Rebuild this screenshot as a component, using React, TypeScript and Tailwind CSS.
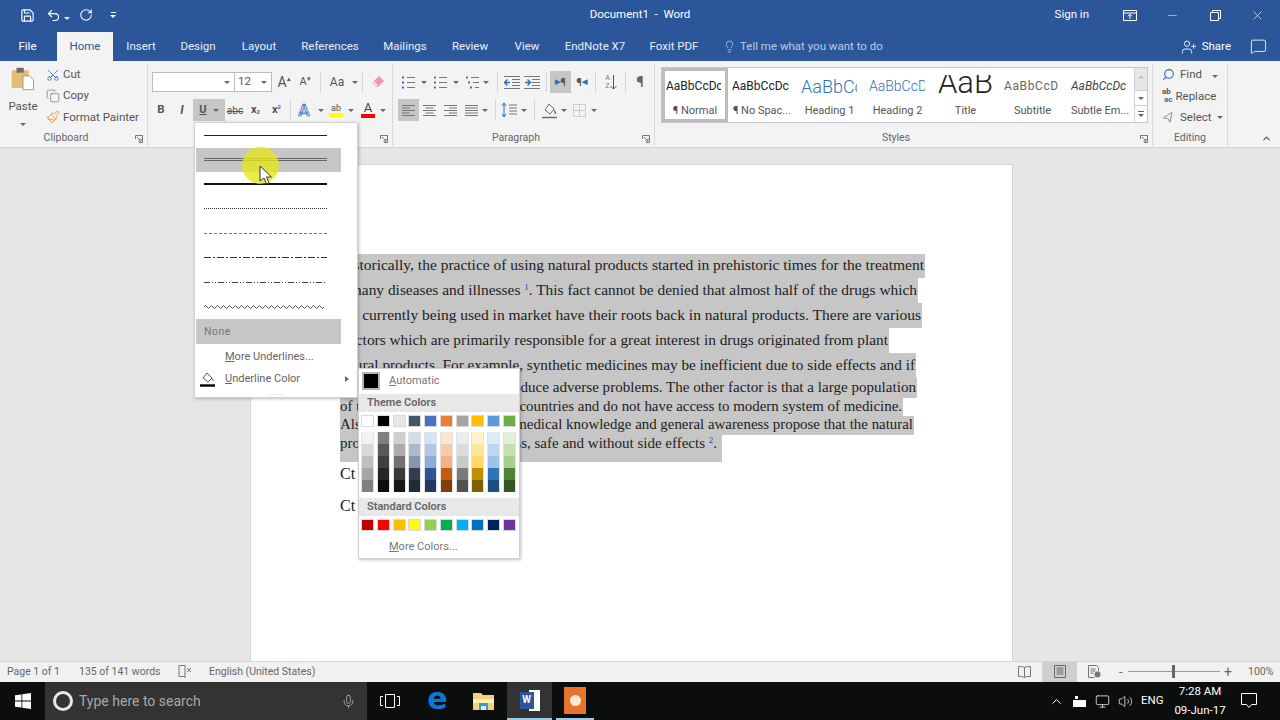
import { ReactNode } from "react";
import { Save, Undo2, RotateCw, Lightbulb, UserPlus, MessageSquare, X, Minus, Scissors, Copy, Paintbrush, Search, MousePointer2, ChevronUp, Mic, Volume2, Monitor } from "lucide-react";

const themeBase = ["bg-[#ffffff]", "bg-[#000000]", "bg-[#e7e6e6]", "bg-[#44546a]", "bg-[#4472c4]", "bg-[#ed7d31]", "bg-[#a5a5a5]", "bg-[#ffc000]", "bg-[#5b9bd5]", "bg-[#70ad47]"];
const themeShades = [
  ["bg-[#f2f2f2]", "bg-[#d9d9d9]", "bg-[#bfbfbf]", "bg-[#a6a6a6]", "bg-[#808080]"],
  ["bg-[#808080]", "bg-[#595959]", "bg-[#404040]", "bg-[#262626]", "bg-[#0d0d0d]"],
  ["bg-[#d0cece]", "bg-[#afabab]", "bg-[#767171]", "bg-[#3b3838]", "bg-[#181717]"],
  ["bg-[#d6dce4]", "bg-[#adb9ca]", "bg-[#8497b0]", "bg-[#333f4f]", "bg-[#222a35]"],
  ["bg-[#d9e2f3]", "bg-[#b4c6e7]", "bg-[#8eaadb]", "bg-[#2f5496]", "bg-[#1f3864]"],
  ["bg-[#fbe5d5]", "bg-[#f7cbac]", "bg-[#f4b183]", "bg-[#c55a11]", "bg-[#833c0b]"],
  ["bg-[#ededed]", "bg-[#dbdbdb]", "bg-[#c9c9c9]", "bg-[#7b7b7b]", "bg-[#525252]"],
  ["bg-[#fff2cc]", "bg-[#fee599]", "bg-[#ffd966]", "bg-[#bf9000]", "bg-[#7f6000]"],
  ["bg-[#deebf6]", "bg-[#bdd7ee]", "bg-[#9dc3e6]", "bg-[#2e75b5]", "bg-[#1e4e79]"],
  ["bg-[#e2efd9]", "bg-[#c5e0b3]", "bg-[#a8d08d]", "bg-[#538135]", "bg-[#375623]"],
];
const standard = ["bg-[#c00000]", "bg-[#ff0000]", "bg-[#ffc000]", "bg-[#ffff00]", "bg-[#92d050]", "bg-[#00b050]", "bg-[#00b0f0]", "bg-[#0070c0]", "bg-[#002060]", "bg-[#7030a0]"];

const tabs = [
  { t: "Insert", c: "w-[56px]" },
  { t: "Design", c: "w-[58px]" },
  { t: "Layout", c: "w-[64px]" },
  { t: "References", c: "w-[78px]" },
  { t: "Mailings", c: "w-[72px]" },
  { t: "Review", c: "w-[58px]" },
  { t: "View", c: "w-[56px]" },
  { t: "EndNote X7", c: "w-[80px]" },
  { t: "Foxit PDF", c: "w-[78px]" },
];

const styleItems = [
  { p: "AaBbCcDc", l: "¶ Normal", c: "text-[12px] ml-[1px] mr-[4px] text-[#222]", w: "w-[66px]", sel: true },
  { p: "AaBbCcDc", l: "¶ No Spac...", c: "text-[12px] ml-[4px] mr-[7px] text-[#222]", w: "w-[68px]" },
  { p: "AaBbCcDc", l: "Heading 1", c: "text-[18px] ml-[5px] mr-[6px] text-[#2e74b5] font-light", w: "w-[67px]" },
  { p: "AaBbCcDc", l: "Heading 2", c: "text-[14px] ml-[6px] mr-[7px] text-[#2e74b5] font-light", w: "w-[69px]" },
  { p: "AaB", l: "Title", c: "text-[31px] leading-[20px] justify-center pb-[6px] [clip-path:inset(4px_0_0_0)] text-[#222] font-light", w: "w-[67px]" },
  { p: "AaBbCcDc", l: "Subtitle", c: "text-[12px] ml-[5px] mr-[7px] tracking-[0.6px] text-[#666]", w: "w-[67px]" },
  { p: "AaBbCcDc", l: "Subtle Em...", c: "text-[12px] ml-[5px] mr-[7px] italic text-[#444]", w: "w-[68px]" },
];

function Sup({ n }: { n: string }) {
  return <sup className="text-[9px] text-[#3b3bc0]">{n}</sup>;
}

// right-aligned so the visible end of each line sits where the selection ends;
// lines with a left part also start at the margin, the colour menu covers the join
const docLines: { l?: string; t: ReactNode; c: string }[] = [
  { t: "Historically, the practice of using natural products started in prehistoric times for the treatment", c: "w-[585px] h-[24px] pb-[2px] pr-px text-[15.5px]" },
  { t: <>of many diseases and illnesses <Sup n="1" />. This fact cannot be denied that almost half of the drugs which</>, c: "w-[578px] h-[25px] pb-[2px] pr-px text-[15.4px]" },
  { t: "are currently being used in market have their roots back in natural products. There are various", c: "w-[582px] h-[25px] pb-[2px] pr-px text-[15.5px]" },
  { t: "factors which are primarily responsible for a great interest in drugs originated from plant", c: "w-[549px] h-[25px] pb-[2px] pr-px text-[15.35px]" },
  { t: "natural products. For example, synthetic medicines may be inefficient due to side effects and if", c: "w-[576px] h-[24px] pr-px text-[15.25px]" },
  { t: "may produce adverse problems. The other factor is that a large population", c: "w-[577px] h-[21px] pr-px text-[15.1px]" },
  { l: "of the people in developing", t: "countries and do not have access to modern system of medicine.", c: "w-[563px] h-[18px] pb-[2px] pr-px text-[14.9px]" },
  { l: "Also, people with increased", t: "medical knowledge and general awareness propose that the natural", c: "w-[574px] h-[19px] pb-[3px] pr-px text-[14.9px]" },
  { l: "products are", t: <>harmless, safe and without side effects <Sup n="2" />.</>, c: "w-[382px] h-[27px] pb-[11px] pr-[5px] text-[15px]" },
];

function Caret({ c = "text-[#666]" }: { c?: string }) {
  return <span className={`inline-block w-0 h-0 border-l-[3px] border-r-[3px] border-t-[3px] border-l-transparent border-r-transparent border-t-current ${c}`} />;
}

function Cell({ c, children }: { c: string; children?: ReactNode }) {
  return <div className={`flex items-center justify-center shrink-0 h-[22px] ${c}`}>{children}</div>;
}

function Sep({ c }: { c: string }) {
  return <div className={`w-px h-[20px] bg-[#d4d4d4] shrink-0 ${c}`} />;
}

function Launcher() {
  return (
    <svg width="8" height="8" viewBox="0 0 8 8" className="absolute right-[4px] bottom-[3px]" fill="none" stroke="#777">
      <path d="M.5 4V.5H7.5M7.5 .5V7.5H4M2 2l4 4M6 3.500V6H3.500" />
    </svg>
  );
}

function Group({ label, c, pad = "pr-[15px]", launcher = true, children }: { label?: string; c: string; pad?: string; launcher?: boolean; children: ReactNode }) {
  return (
    <div className={`relative shrink-0 flex flex-col border-r border-[#dadada] mt-[3px] mb-px ${c}`}>
      <div className="flex-1 min-h-0">{children}</div>
      <div className={`h-[18px] pt-[3px] text-center text-[10.5px] leading-[14px] text-[#666] ${pad}`}>{label}</div>
      {launcher ? <Launcher /> : null}
    </div>
  );
}

// horizontal text lines used by the list and alignment buttons
function Lines({ align, n = 5 }: { align: "l" | "c" | "r" | "j"; n?: number }) {
  const rows = Array.from({ length: n }, (_, i) => {
    const short = i % 2 === 1 && align !== "j";
    const w = short ? 8 : 13;
    const x = align === "l" || align === "j" ? 0 : align === "c" ? (13 - w) / 2 : 13 - w;
    return <path key={i} d={`M${x} ${1.5 + i * 2.5}h${w}`} />;
  });
  return (
    <svg width="13" height="13" viewBox="0 0 13 13" fill="none" stroke="#777">
      {rows}
    </svg>
  );
}

function ListIcon({ kind }: { kind: "b" | "n" | "m" }) {
  return (
    <svg width="15" height="15" viewBox="0 0 15 15" fill="none">
      <path d={kind === "m" ? "M6 2.500h8M8 7.500h6M10 12.500h4" : "M6 2.500h8M6 7.500h8M6 12.500h8"} stroke="#777" />
      <path d={kind === "m" ? "M1 2.500h2M3 7.500h2M5 12.500h2" : "M1 2.500h2M1 7.500h2M1 12.500h2"} stroke={kind === "b" ? "#2f6db5" : "#8a6d3b"} strokeWidth="2" />
    </svg>
  );
}

function IndentIcon({ flip }: { flip?: boolean }) {
  return (
    <svg width="16" height="13" viewBox="0 0 16 13" fill="none">
      <path d="M0 .5h16M8 3.500h8M8 6.500h8M8 9.500h8M0 12.500h16" stroke="#777" />
      <path d={flip ? "M1 6.500h5M3.500 3.500l3 3-3 3" : "M6 6.500H1M3.500 3.500l-3 3 3 3"} stroke="#2f6db5" strokeWidth="1.4" />
    </svg>
  );
}

function ParaDir({ rtl }: { rtl?: boolean }) {
  return (
    <span className="flex items-center text-[11px] font-bold text-[#5a5a5a] leading-none">
      {rtl ? "¶" : <span className="text-[7px] text-[#2f6db5]">▶</span>}
      {rtl ? <span className="text-[7px] text-[#2f6db5]">◀</span> : "¶"}
    </span>
  );
}

function TabsRow() {
  return (
    <div className="h-[31px] bg-[#2b579a] flex items-end text-[11.5px] text-[#e8eef7]">
      <div className="w-[55px] h-[31px] pt-[2px] flex items-center justify-center text-white">File</div>
      <div className="w-[2px]" />
      <div className="w-[56px] h-[29px] bg-[#f3f3f3] flex items-center justify-center text-[#2b579a]">Home</div>
      {tabs.map((x) => (
        <div key={x.t} className={`h-[31px] pt-[2px] flex items-center justify-center whitespace-nowrap ${x.c}`}>
          {x.t}
        </div>
      ))}
      <div className="h-[31px] pt-[2px] flex items-center gap-[4px] ml-[10px] text-[#b9cbe4]">
        <Lightbulb size={13} strokeWidth={1.4} />
        <span>Tell me what you want to do</span>
      </div>
      <div className="flex-1" />
      <div className="h-[31px] pt-[2px] flex items-center gap-[5px] text-white">
        <UserPlus size={16} strokeWidth={1.3} />
        <span>Share</span>
      </div>
      <div className="h-[31px] pt-[1px] flex items-center ml-[19px] mr-[13px] text-white">
        <MessageSquare size={17} strokeWidth={1.2} />
      </div>
    </div>
  );
}

function TitleRow() {
  return (
    <div className="h-[30px] bg-[#2b579a] flex items-center text-white relative">
      <div className="flex items-center pl-[20px]">
        <Save size={15} strokeWidth={1.8} />
        <Undo2 size={15} strokeWidth={1.8} className="ml-[11px]" />
        <span className="ml-[3px]"><Caret c="text-[#e8eef7]" /></span>
        <RotateCw size={14} strokeWidth={1.8} className="ml-[9px]" />
        <span className="ml-[17px] flex flex-col items-center gap-[2px]">
          <span className="w-[5px] h-px bg-white" />
          <Caret c="text-white" />
        </span>
      </div>
      <div className="absolute left-[579px] w-[122px] text-center text-[11.5px] whitespace-pre">{"Document1  -  Word"}</div>
      <div className="flex-1" />
      <div className="text-[11.5px] whitespace-nowrap mr-[34px]">Sign in</div>
      <svg width="14" height="11" viewBox="0 0 14 11" fill="none" stroke="white" className="mr-[29px]">
        <path d="M.5.5h13v10H.5zM.5 3h13M7 9V4.500M5 6.200l2-2 2 2" />
      </svg>
      <Minus size={13} strokeWidth={1} className="mr-[31px]" />
      <svg width="11" height="11" viewBox="0 0 11 11" fill="none" stroke="white" className="mr-[29px]">
        <path d="M.5 2.500h8v8h-8zM2.500 2.500v-2h8v8h-2" />
      </svg>
      <X size={15} strokeWidth={1} className="mr-[15px]" />
    </div>
  );
}

function Ribbon() {
  return (
    <div className="h-[87px] bg-[#f3f3f3] border-b border-[#d4d4d4] flex text-[11.5px] text-[#555]">
      <Group label="Clipboard" c="w-[148px]">
        <div className="flex h-full">
          <div className="w-[46px] flex flex-col items-center pt-[3px]">
            <svg width="30" height="29" viewBox="0 0 30 29">
              <rect x="1" y="4" width="21" height="22" rx="1" fill="#e6bb74" />
              <rect x="7" y="1" width="9" height="6" fill="#6d6d6d" />
              <path d="M15 11h8l5 5v12H15z" fill="#fff" stroke="#8a8a8a" />
            </svg>
            <span className="mt-[8px] leading-[14px]">Paste</span>
            <span className="mt-[4px] leading-none"><Caret /></span>
          </div>
          <div className="flex flex-col">
            <div className="h-[21.5px] flex items-center gap-[3px]">
              <Scissors size={14} strokeWidth={1.4} className="text-[#3a6fb0] -rotate-90" />
              Cut
            </div>
            <div className="h-[21.5px] flex items-center gap-[3px]">
              <Copy size={14} strokeWidth={1.2} className="text-[#777]" />
              Copy
            </div>
            <div className="h-[21.5px] flex items-center gap-[3px]">
              <Paintbrush size={14} strokeWidth={1.6} className="text-[#d99a3c]" />
              Format Painter
            </div>
          </div>
        </div>
      </Group>

      <Group label="" c="w-[245px]" launcher={false}>
        <div className="flex items-center pl-[4px] pt-[7px] h-[29px]">
          <div className="w-[88px] h-[20px] bg-white border border-[#bdbdbd] flex items-center justify-end pr-[4px]"><Caret /></div>
          <div className="w-[39px] h-[20px] bg-white border border-l-0 border-[#bdbdbd] flex items-center justify-between pl-[3px] pr-[4px] text-[#555]">12<Caret /></div>
          <Cell c="w-[22px] ml-[1px] text-[14px]">A<sup className="text-[7px]">▴</sup></Cell>
          <Cell c="w-[20px] text-[11px]">A<sup className="text-[7px]">▾</sup></Cell>
          <Sep c="ml-[5px]" />
          <Cell c="w-[28px] ml-[2px] text-[12px]">Aa</Cell>
          <Cell c="w-[7px]"><Caret /></Cell>
          <Sep c="ml-[4px]" />
          <Cell c="w-[28px] ml-[1px]">
            <svg width="14" height="14" viewBox="0 0 14 14">
              <path d="M5 12 1 8l7-7 5 5-6 6z" fill="#e79aa8" />
              <path d="M1 8l4 4 2-2-4-4z" fill="#f3d7dc" />
            </svg>
          </Cell>
        </div>
        <div className="flex items-center pl-[2px] mt-[6px]">
          <Cell c="w-[22px] font-bold text-[11.5px]">B</Cell>
          <Cell c="w-[20px] italic font-bold text-[12px]">I</Cell>
          <div className="w-[32px] h-[22px] ml-[1px] bg-[#c6c6c6] flex items-center">
            <span className="w-[20px] text-center underline font-bold text-[11px]">U</span>
            <Caret />
          </div>
          <Cell c="w-[20px] text-[10px] line-through">abc</Cell>
          <Cell c="w-[21px] text-[11px] font-bold">x<sub className="text-[6px]">2</sub></Cell>
          <Cell c="w-[21px] text-[11px] font-bold">x<sup className="text-[6px]">2</sup></Cell>
          <Sep c="ml-[3px]" />
          <Cell c="w-[26px] text-[17px] leading-none font-bold text-[#bcd3ec] [-webkit-text-stroke:0.7px_#3a78bd]">A</Cell>
          <Cell c="w-[7px]"><Caret /></Cell>
          <Cell c="w-[24px]">
            <span className="flex flex-col items-center leading-none">
              <span className="text-[9px] text-[#555] leading-[10px]">ab</span>
              <span className="w-[14px] h-[4px] bg-[#ffff00]" />
            </span>
          </Cell>
          <Cell c="w-[6px]"><Caret /></Cell>
          <Cell c="w-[24px] ml-[2px]">
            <span className="flex flex-col items-center leading-none">
              <span className="text-[13px] text-[#444] leading-[12px]">A</span>
              <span className="w-[14px] h-[4px] bg-[#ff0000]" />
            </span>
          </Cell>
          <Cell c="w-[6px]"><Caret /></Cell>
        </div>
        <Launcher />
      </Group>

      <Group label="Paragraph" c="w-[262px]">
        <div className="flex items-center pl-[5px] pt-[7px] h-[29px]">
          <Cell c="w-[20px]"><ListIcon kind="b" /></Cell>
          <Cell c="w-[12px]"><Caret /></Cell>
          <Cell c="w-[20px]"><ListIcon kind="n" /></Cell>
          <Cell c="w-[12px]"><Caret /></Cell>
          <Cell c="w-[20px]"><ListIcon kind="m" /></Cell>
          <Cell c="w-[8px]"><Caret /></Cell>
          <Sep c="ml-[7px]" />
          <Cell c="w-[20px] ml-[4px]"><IndentIcon /></Cell>
          <Cell c="w-[20px]"><IndentIcon flip /></Cell>
          <Sep c="ml-[4px]" />
          <Cell c="w-[21px] ml-[3px] bg-[#c6c6c6]"><ParaDir /></Cell>
          <Cell c="w-[21px]"><ParaDir rtl /></Cell>
          <Sep c="ml-[3px]" />
          <Cell c="w-[22px] ml-[4px]">
            <span className="flex items-center">
              <span className="flex flex-col text-[7px] leading-[8px] text-[#4a7ebb]"><span>A</span><span>Z</span></span>
              <svg width="7" height="15" viewBox="0 0 7 15" fill="none" stroke="#555"><path d="M3.500 0v14M.5 11l3 3 3-3" /></svg>
            </span>
          </Cell>
          <Sep c="ml-[3px]" />
          <Cell c="w-[28px] text-[15px] font-bold text-[#666]">¶</Cell>
        </div>
        <div className="flex items-center pl-[5px] mt-[6px]">
          <Cell c="w-[21px] bg-[#c6c6c6]"><Lines align="l" /></Cell>
          <Cell c="w-[21px]"><Lines align="c" /></Cell>
          <Cell c="w-[21px]"><Lines align="r" /></Cell>
          <Cell c="w-[21px]"><Lines align="j" /></Cell>
          <Cell c="w-[6px]"><Caret /></Cell>
          <Sep c="ml-[7px]" />
          <Cell c="w-[20px] ml-[3px]">
            <svg width="16" height="16" viewBox="0 0 16 16" fill="none">
              <path d="M8 3h8M8 6h8M8 9h8M8 12h8" stroke="#777" />
              <path d="M3 1v14M1 4l2-3 2 3M1 12l2 3 2-3" stroke="#2f6db5" />
            </svg>
          </Cell>
          <Cell c="w-[9px]"><Caret /></Cell>
          <Sep c="ml-[6px]" />
          <Cell c="w-[24px] ml-[2px]">
            <svg width="17" height="17" viewBox="0 0 17 17" fill="none">
              <path d="M8 2l5 5-4 5-5-4z" fill="#fff" stroke="#666" />
              <path d="M13 7c1 2 3 3 2 5-2 0-2-3-2-5z" fill="#4a7ebb" />
              <path d="M1 15.500h15" stroke="#666" strokeWidth="1.4" />
            </svg>
          </Cell>
          <Cell c="w-[6px]"><Caret /></Cell>
          <Cell c="w-[20px] ml-[2px]">
            <svg width="13" height="13" viewBox="0 0 13 13" fill="none" stroke="#aaa" strokeDasharray="1 1">
              <path d="M.5.5h12v12H.5zM6.500.5v12M.5 6.500h12" />
            </svg>
          </Cell>
          <Cell c="w-[10px]"><Caret /></Cell>
        </div>
      </Group>

      <Group label="Styles" c="w-[498px]">
        <div className="flex pl-[6px] pt-[3px]">
          <div className="flex bg-white border border-[#c6c6c6] h-[56px] w-[487px] items-stretch">
            {styleItems.map((s) => (
              <div key={s.l} className={`${s.w} shrink-0 flex flex-col items-center ${s.sel ? "border-[3px] border-[#bcbcbc]" : "py-[3px]"}`}>
                <div className={`h-[30px] self-stretch flex items-center overflow-hidden whitespace-nowrap ${s.c}`}>{s.p}</div>
                <div className="text-[11px] leading-[14px] mt-[3px] whitespace-nowrap">{s.l}</div>
              </div>
            ))}
            <div className="flex-1" />
            <div className="w-[14px] flex flex-col border-l border-[#d0d0d0]">
              <div className="h-[22px] bg-[#e6e6e6] flex items-center justify-center"><span className="rotate-180 leading-none"><Caret c="text-[#bbb]" /></span></div>
              <div className="h-[16px] border-y border-[#d0d0d0] flex items-center justify-center"><Caret /></div>
              <div className="flex-1 flex flex-col items-center justify-center gap-[2px]">
                <span className="w-[6px] h-px bg-[#666]" />
                <Caret />
              </div>
            </div>
          </div>
        </div>
      </Group>

      <Group label="Editing" c="w-[75px]" pad="pr-0" launcher={false}>
        <div className="flex flex-col pl-[9px]">
          <div className="h-[21.5px] flex items-center gap-[5px]">
            <Search size={13} strokeWidth={2} className="text-[#2f6db5] -scale-x-100" />
            Find
            <span className="ml-[5px]"><Caret /></span>
          </div>
          <div className="h-[21.5px] flex items-center gap-[3px]">
            <span className="flex flex-col text-[8px] leading-[8px] font-bold text-[#2f6db5]"><span className="text-[#555]">ab</span><span className="pl-[2px]">ac</span></span>
            Replace
          </div>
          <div className="h-[21.5px] flex items-center gap-[5px]">
            <MousePointer2 size={13} strokeWidth={1.2} className="text-[#666] -scale-x-100 -rotate-12" />
            Select
            <Caret />
          </div>
        </div>
      </Group>

      <div className="flex-1 relative">
        <ChevronUp size={11} strokeWidth={2.5} className="absolute left-[33px] bottom-[3px] text-[#555]" />
      </div>
    </div>
  );
}

function Page() {
  return (
    <div className="flex-1 min-h-0 bg-[#e6e6e6] pl-[250px] pt-[16px] overflow-hidden">
      <div className="w-[763px] h-[600px] bg-white border border-[#d4d4d4] pl-[89px] pt-[89px] font-['Liberation_Serif',serif] text-[#222]">
        {docLines.map((l, i) => (
          <div key={i} className={`bg-[#c6c6c6] overflow-hidden flex items-center ${l.l ? "justify-between" : "justify-end"} ${l.c}`}>
            {l.l ? <span className="whitespace-pre shrink-0">{l.l}</span> : null}
            <span className="whitespace-pre shrink-0">{l.t}</span>
          </div>
        ))}
        <div className="text-[16px] leading-[32px] mt-[-4px]">Ct</div>
        <div className="text-[16px] leading-[32px]">Ct</div>
      </div>
    </div>
  );
}

function UnderlineMenu() {
  const row = "h-[24.5px] flex items-center pl-[8px]";
  return (
    <div className="absolute left-[194px] top-[122px] w-[164px] h-[276px] bg-white border border-[#d0d0d0] shadow-[1px_1px_3px_rgba(0,0,0,0.25)] pl-px text-[11px] text-[#666]">
      <div className="w-[145px]">
        <div className={row}><div className="w-[123px] border-t border-[#222]" /></div>
        <div className={`${row} bg-[#c6c6c6]`}><div className="w-[123px] h-[3px] border-y border-[#666]" /></div>
        <div className={row}><div className="w-[123px] border-t-2 border-[#111]" /></div>
        <div className={row}><div className="w-[123px] border-t border-dotted border-[#333]" /></div>
        <div className={row}><div className="w-[123px] border-t border-dashed border-[#777]" /></div>
        <div className={row}><div className="w-[123px] h-px bg-[repeating-linear-gradient(90deg,#333_0_7px,transparent_7px_9px,#333_9px_11px,transparent_11px_13px)]" /></div>
        <div className={row}><div className="w-[123px] h-px bg-[repeating-linear-gradient(90deg,#444_0_6px,transparent_6px_8px,#444_8px_9px,transparent_9px_11px,#444_11px_12px,transparent_12px_14px)]" /></div>
        <div className={row}>
          <svg width="123" height="4" viewBox="0 0 123 4" fill="none" stroke="#555">
            <path d={"M0 2" + " q1.5 -3 3 0 t3 0".repeat(20)} />
          </svg>
        </div>
        <div className={`${row} bg-[#c6c6c6] pt-[2px] text-[#777] tracking-[0.5px] text-[10.5px]`}>None</div>
      </div>
      <div className="h-[23px] mt-[2px] flex items-center pl-[29px]"><span><u>M</u>ore Underlines...</span></div>
      <div className="h-[21px] flex items-center">
        <svg width="18" height="15" viewBox="0 0 18 15" fill="none" className="ml-[3px]">
          <path d="M8 1l5 5-4 4-5-4z" stroke="#555" fill="#fff" />
          <path d="M13 6c1 1 2 2 2 3-2 0-2-2-2-3z" fill="#4a7ebb" />
          <path d="M1 13.500h15" stroke="#000" strokeWidth="2.4" />
        </svg>
        <span className="ml-[8px]"><u>U</u>nderline Color</span>
        <span className="ml-auto mr-[8px] w-0 h-0 border-y-[3px] border-l-[4px] border-y-transparent border-l-[#666]" />
      </div>
      <div className="text-center text-[7px] leading-[6px] tracking-[2px] text-[#999]">....</div>
    </div>
  );
}

function ColorMenu() {
  const head = "h-[18px] pt-px bg-[#e8e8e8] flex items-center pl-[8px] font-semibold text-[#666]";
  return (
    <div className="absolute left-[358px] top-[368px] w-[162px] h-[191px] bg-white border border-[#d0d0d0] shadow-[1px_1px_3px_rgba(0,0,0,0.25)] text-[11px] text-[#777]">
      <div className="h-[25px] pb-[1px] flex items-center pl-[3px]">
        <span className="w-[18px] h-[18px] border-2 border-[#b5b5b5] bg-black" />
        <span className="ml-[9px]"><u>A</u>utomatic</span>
      </div>
      <div className={head}>Theme Colors</div>
      <div className="flex justify-between pl-[2px] pr-[3px] pt-[3px]">
        {themeBase.map((c) => (
          <span key={c} className={`w-[13px] h-[12px] border border-[#d8d8d8] ${c}`} />
        ))}
      </div>
      <div className="flex justify-between pl-[2px] pr-[3px] pt-[5px]">
        {themeShades.map((col, i) => (
          <div key={i} className="flex flex-col w-[13px] border-x border-[#e2e2e2]">
            {col.map((c) => (
              <span key={c} className={`h-[12px] ${c}`} />
            ))}
          </div>
        ))}
      </div>
      <div className={`${head} mt-[6px]`}>Standard Colors</div>
      <div className="flex justify-between pl-[2px] pr-[3px] pt-[3px]">
        {standard.map((c) => (
          <span key={c} className={`w-[13px] h-[12px] border border-[#d8d8d8] ${c}`} />
        ))}
      </div>
      <div className="pl-[30px] pt-[8px]"><u>M</u>ore Colors...</div>
    </div>
  );
}

function StatusBar() {
  return (
    <div className="h-[21px] bg-[#f1f1f1] border-t border-[#d6d6d6] flex items-center text-[10.5px] text-[#666] pb-[1px]">
      <span className="ml-[7px] w-[72px]">Page 1 of 1</span>
      <span className="w-[99px]">135 of 141 words</span>
      <svg width="14" height="13" viewBox="0 0 14 13" fill="none" stroke="#777">
        <path d="M7 .5H1v11h6M7 0v13M9 3l4 4M13 3l-4 4" />
      </svg>
      <span className="ml-[17px]">English (United States)</span>
      <div className="flex-1" />
      <svg width="13" height="12" viewBox="0 0 13 12" fill="none" stroke="#777" className="mr-[11px]">
        <path d="M6.500 1.500C5 .5 2 .5.5.5v10c2 0 4.500 0 6 1 1.500-1 4-1 6-1V.500c-1.500 0-4.500 0-6 1zM6.500 1.500v10" />
      </svg>
      <div className="w-[35px] h-[20px] bg-[#cfcfcf] flex items-center justify-center">
        <svg width="12" height="13" viewBox="0 0 12 13" fill="none" stroke="#666">
          <path d="M.5.5h11v12H.5zM2.500 3h7M2.500 5h7M2.500 7h7M2.500 9h7" />
        </svg>
      </div>
      <svg width="13" height="13" viewBox="0 0 13 13" fill="none" stroke="#777" className="ml-[11px]">
        <path d="M.5.500h8l2 2v4M.5.500v12h6M2.500 4h5M2.500 6h5M2.500 8h3" />
        <circle cx="9.500" cy="9.500" r="3" fill="#777" stroke="none" />
      </svg>
      <span className="ml-[18px] w-[4px] text-[13px] leading-none">-</span>
      <div className="relative w-[92px] h-px bg-[#999] ml-[5px]">
        <span className="absolute left-[44px] top-[-6px] w-[3px] h-[13px] bg-[#666]" />
      </div>
      <span className="ml-[4px] w-[8px] text-[14px] leading-none">+</span>
      <span className="ml-[16px] w-[25px] mr-[7px] whitespace-nowrap">100%</span>
    </div>
  );
}

function Taskbar() {
  return (
    <div className="h-[38px] bg-[#0b0e0c] flex items-center text-white">
      <div className="w-[45px] flex justify-center">
        <svg width="16" height="16" viewBox="0 0 16 16" fill="white">
          <path d="M0 2.300 6.500 1.400v6.200H0zM7.300 1.300 16 0v7.600H7.300zM0 8.400h6.500v6.200L0 13.700zM7.300 8.400H16V16l-8.700-1.300z" />
        </svg>
      </div>
      <div className="w-[322px] h-[38px] bg-[#333333] flex items-center pl-[8px]">
        <span className="w-[20px] h-[20px] rounded-full border-[3px] border-[#e8e8e8]" />
        <span className="ml-[6px] text-[14px] text-[#a8a8a8]">Type here to search</span>
        <Mic size={15} strokeWidth={1.2} className="ml-auto mr-[11px] text-[#bdbdbd]" />
      </div>
      <div className="w-[46px] flex justify-center">
        <svg width="20" height="16" viewBox="0 0 20 16" fill="none" stroke="white">
          <path d="M5.500 1.500h9v13h-9zM3 3.500H.5v9H3M17 3.500h2.500v9H17" />
        </svg>
      </div>
      <div className="w-[49px] flex justify-center">
        <span className="font-['DejaVu_Sans',sans-serif] font-bold text-[30px] leading-none text-[#0a78d4] -mt-[5px]">e</span>
      </div>
      <div className="w-[42px] flex justify-center">
        <svg width="21" height="19" viewBox="0 0 21 19">
          <path d="M0 1h8l2 2h11v15H0z" fill="#f2d27a" />
          <rect x="0" y="7" width="21" height="4" fill="#fdeeb5" />
          <rect x="6" y="11" width="9" height="7" fill="#3d9ad1" />
          <rect x="8" y="14" width="5" height="4" fill="#d9ecf7" />
        </svg>
      </div>
      <div className="w-[45px] h-[38px] ml-[3px] bg-[#333333] border-b-2 border-[#9cc9ea] flex items-center justify-center">
        <div className="relative w-[20px] h-[21px]">
          <div className="absolute right-0 top-0 w-[11px] h-[21px] bg-white" />
          <div className="absolute left-0 top-[2px] w-[14px] h-[17px] bg-[#2b579a] flex items-center justify-center text-[10px] font-bold leading-none">W</div>
        </div>
      </div>
      <div className="w-[38px] h-[38px] ml-[4px] border-b-2 border-[#9cc9ea] flex items-center justify-center">
        <div className="w-[22px] h-[27px] bg-[#e8732a] flex items-center justify-center">
          <span className="w-[11px] h-[11px] rounded-full bg-[#fde8d8]" />
        </div>
      </div>
      <div className="flex-1" />
      <ChevronUp size={15} strokeWidth={1.6} className="mr-[8px]" />
      <svg width="15" height="11" viewBox="0 0 15 11" fill="white" className="mr-[8px]">
        <path d="M3 0h3v3H3zM1 4h13v7H1z" />
      </svg>
      <Monitor size={15} strokeWidth={1.2} className="mr-[8px]" />
      <Volume2 size={15} strokeWidth={1.2} className="mr-[8px]" />
      <span className="text-[11.5px] w-[23px] mr-[7px]">ENG</span>
      <div className="w-[58px] mr-[1px] text-center text-[11.5px] leading-[19px]">
        <div>7:28 AM</div>
        <div>09-Jun-17</div>
      </div>
      <div className="w-[50px] pr-[12px] flex justify-center">
        <svg width="16" height="16" viewBox="0 0 16 16" fill="none" stroke="white">
          <path d="M.5.500h15v11h-5l-2.500 3-2.500-3h-5z" />
        </svg>
      </div>
    </div>
  );
}

export default function App() {
  return (
    <div className="relative w-[1280px] h-[720px] overflow-hidden flex flex-col font-['Roboto',sans-serif]">
      <TitleRow />
      <TabsRow />
      <Ribbon />
      <Page />
      <StatusBar />
      <Taskbar />

      <UnderlineMenu />
      <ColorMenu />

      {/* presenter's cursor highlight */}
      <div className="absolute left-[242px] top-[147px] w-[37px] h-[37px] rounded-full bg-[#e6e619]/80" />
      <svg width="14" height="20" viewBox="0 0 14 20" className="absolute left-[259px] top-[165px]">
        <path d="M1 1v15l4-3 2.500 6 2.500-1-2.500-6h5z" fill="#fff" stroke="#333" />
      </svg>
    </div>
  );
}
